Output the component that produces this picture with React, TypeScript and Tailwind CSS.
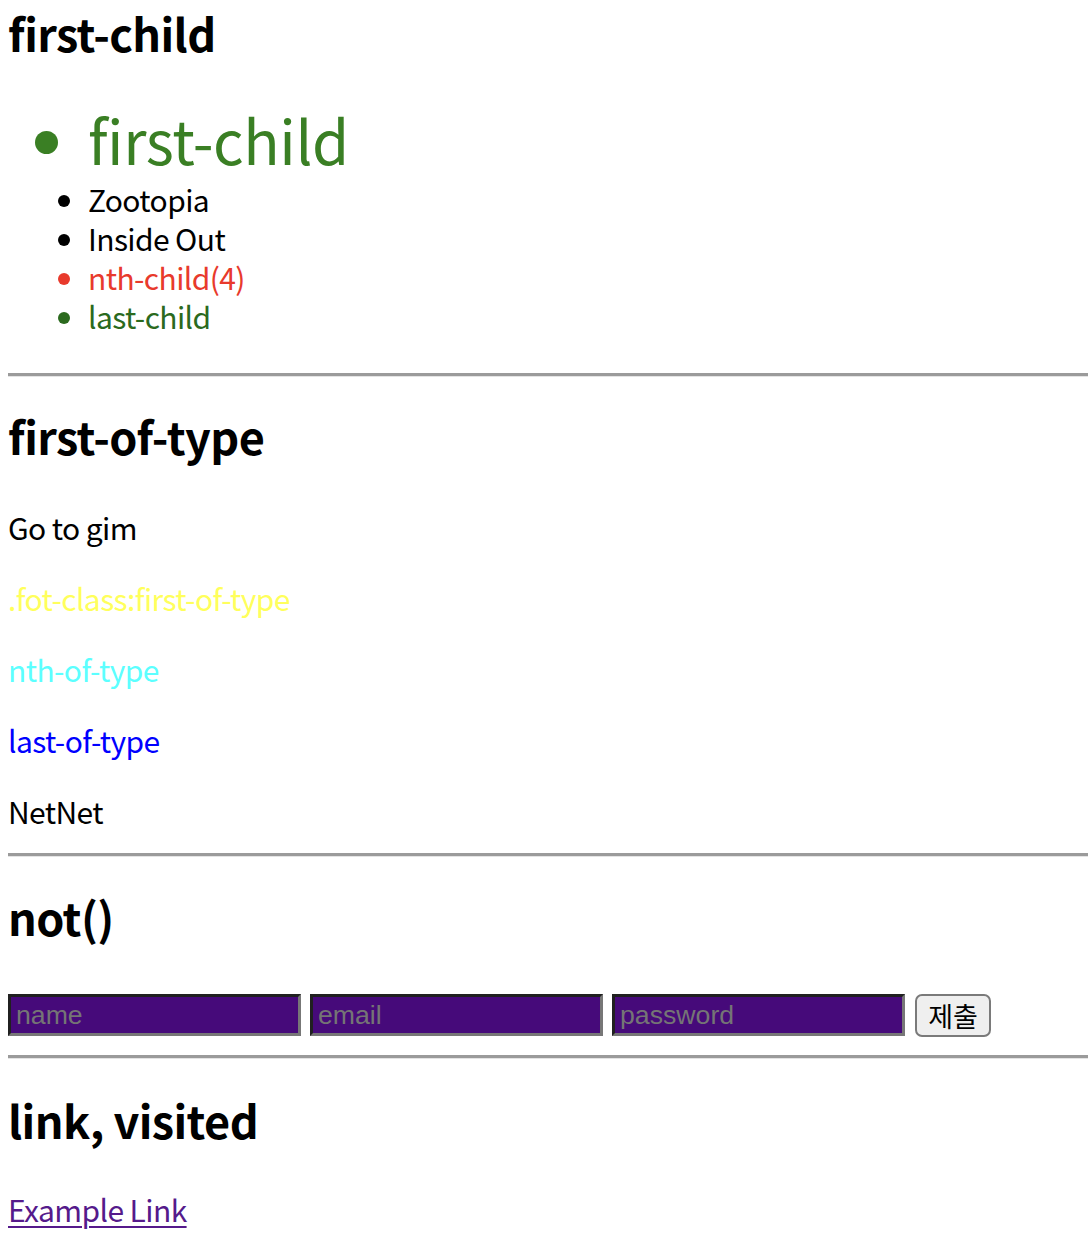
import React from 'react';

const Rule = ({ className }: { className: string }) => (
  <hr className={`h-0 border-0 border-t-[3px] border-t-[#9b9b9b] border-b border-b-[#e4e4e4] ${className}`} />
);

const Field = ({ placeholder, type }: { placeholder: string; type: string }) => (
  <input
    type={type}
    placeholder={placeholder}
    className="w-[293px] h-[42px] box-border bg-[#460a7a] border-[3px] border-t-[#202020] border-l-[#202020] border-r-[#777777] border-b-[#777777] pl-[5px] font-['Liberation_Sans',sans-serif] text-[26.67px] text-white placeholder:text-[#757575] outline-none"
  />
);

const App: React.FC = () => {
  return (
    <div className="min-h-[1244px] bg-white pl-2 text-black font-['Noto_Sans_CJK_KR','Noto_Sans',sans-serif]">
      {/* first-child */}
      <h2 className="pt-[4px] text-[45px] leading-[58px] tracking-[-0.6px] font-bold">first-child</h2>
      <ul className="mt-[35px] pl-[80px] list-disc text-[30px] leading-[39px] tracking-[-0.6px]">
        <li className="text-[60px] leading-[83px] tracking-[-0.4px] text-[#3a7f24]">first-child</li>
        <li>Zootopia</li>
        <li>Inside Out</li>
        <li className="text-[#e83a2c]">nth-child(4)</li>
        <li className="text-[#2b6a1e]">last-child</li>
      </ul>
      <Rule className="mt-[37px]" />

      {/* first-of-type */}
      <h2 className="mt-[30px] text-[45px] leading-[58px] tracking-[-0.6px] font-bold">first-of-type</h2>
      <div className="mt-[43px] flex flex-col gap-[32px] text-[30px] leading-[39px] tracking-[-0.6px]">
        <p>Go to gim</p>
        <p className="text-[#ffff5c]">.fot-class:first-of-type</p>
        <p className="text-[#5cffff]">nth-of-type</p>
        <p className="text-[#0000ff]">last-of-type</p>
        <p>NetNet</p>
      </div>
      <Rule className="mt-[22px]" />

      {/* not() */}
      <h2 className="mt-[31px] text-[45px] leading-[58px] tracking-[-0.6px] font-bold">not()</h2>
      <form className="mt-[48px] flex items-start gap-[9px]" onSubmit={(e) => e.preventDefault()}>
        <Field placeholder="name" type="text" />
        <Field placeholder="email" type="email" />
        <Field placeholder="password" type="password" />
        <button
          type="submit"
          className="ml-[1px] w-[76px] h-[43px] box-border rounded-[7px] border-2 border-[#7a7a7a] bg-[#efefef] text-[27px] leading-[30px] text-black"
        >
          제출
        </button>
      </form>
      <Rule className="mt-[18px]" />

      {/* link, visited */}
      <h2 className="mt-[32px] text-[45px] leading-[58px] tracking-[-0.6px] font-bold">link, visited</h2>
      <p className="mt-[41px] text-[30px] leading-[39px] tracking-[-0.6px]">
        <a href="#example" className="text-[#551a8b] underline decoration-2 underline-offset-[4px]">
          Example Link
        </a>
      </p>
    </div>
  );
};

export default App;
